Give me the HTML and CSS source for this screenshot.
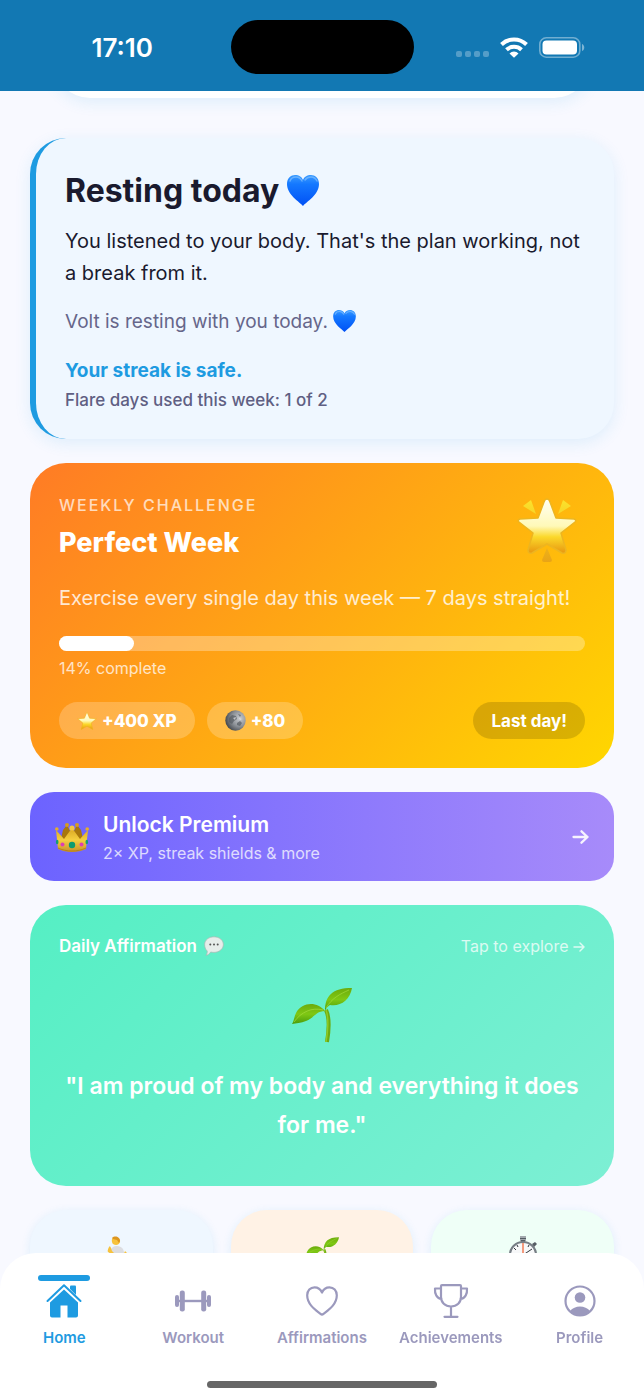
FILE: index.html
```html
<!DOCTYPE html>
<html lang="en">
<head>
  <meta charset="UTF-8" />
  <meta name="viewport" content="width=device-width, initial-scale=1" />
  <title>Home</title>
  <link rel="stylesheet" href="styles.css">
</head>
<body>
  <!-- shared drawings -->
  <svg class="defs" aria-hidden="true">
    <defs>
      <linearGradient id="heartFill" x1="0" y1="0" x2="0" y2="1">
        <stop offset="0" stop-color="#3a9bff" />
        <stop offset=".3" stop-color="#1478ff" />
        <stop offset="1" stop-color="#0050f5" />
      </linearGradient>
      <linearGradient id="starFill" x1="0" y1="0" x2="0" y2="1">
        <stop offset="0" stop-color="#fffff4" />
        <stop offset=".5" stop-color="#fff9b8" />
        <stop offset=".7" stop-color="#fbd82a" />
        <stop offset="1" stop-color="#e8960f" />
      </linearGradient>
      <linearGradient id="rayFill" x1="0" y1="0" x2="0" y2="1">
        <stop offset="0" stop-color="#fbe22c" />
        <stop offset="1" stop-color="#e9a416" />
      </linearGradient>
      <linearGradient id="leafFill" x1="0" y1="0" x2="0" y2="1">
        <stop offset="0" stop-color="#6cab0c" />
        <stop offset=".5" stop-color="#7fc814" />
        <stop offset="1" stop-color="#4b9c0b" />
      </linearGradient>
      <linearGradient id="goldFill" x1="0" y1="0" x2="0" y2="1">
        <stop offset="0" stop-color="#d9a520" />
        <stop offset=".5" stop-color="#f4cf40" />
        <stop offset="1" stop-color="#c8912a" />
      </linearGradient>
      <radialGradient id="moonFill" cx=".7" cy=".4" r=".8">
        <stop offset="0" stop-color="#c9ccd0" />
        <stop offset=".5" stop-color="#8a8f95" />
        <stop offset="1" stop-color="#30343a" />
      </radialGradient>
      <symbol id="heart" viewBox="0 0 32 31">
        <path fill="url(#heartFill)" d="M16 31C13 27 0 20 0 9 0 3 4 0 8 0c4 0 7 2 8 5 1-3 4-5 8-5s8 3 8 9c0 11-13 18-16 22z" />
        <path fill="none" stroke="#8fc8ff" stroke-width="1.500" stroke-linecap="round" opacity=".6" d="M3 6c1-3 4-4 6-4 3 0 5 2 6 4M18 5c2-3 5-3 6-3 3 0 5 2 6 4" />
      </symbol>
      <symbol id="seedling" viewBox="0 0 60 56">
        <path fill="none" stroke="#6cab12" stroke-width="4" d="M34 22c4 8 3 20 1 32" />
        <path fill="none" stroke="#8fc925" stroke-width="1.500" d="M34 22c3 8 2 20 0 32" />
        <path fill="url(#leafFill)" d="M33 23C33 8 40 0 60 0 58 12 48 19 38 17c-2 1-4 3-5 6z" />
        <path fill="url(#leafFill)" d="M33 23C25 13 10 14 4 25c-2 4-2 8-4 11 4-1 9-1 14-3 8-3 10-10 19-10z" />
        <path fill="none" stroke="#a4dc3c" stroke-width="1" opacity=".7" d="M34 20C40 10 48 6 57 2M31 22C20 19 9 24 2 34" />
      </symbol>
    </defs>
  </svg>

  <div class="app">
    <header class="status-bar">
      <span class="clock">17:10</span>
      <span class="island"></span>
      <span class="signals">
        <svg class="dots" width="33" height="6" viewBox="0 0 33 6" fill="#fff" opacity=".28" aria-hidden="true">
          <rect width="6" height="6" rx="2" /><rect x="9" width="6" height="6" rx="2" /><rect x="18" width="6" height="6" rx="2" /><rect x="27" width="6" height="6" rx="2" />
        </svg>
        <svg width="28" height="21" viewBox="0 0 28 21" aria-hidden="true">
          <path fill="none" stroke="#fff" stroke-width="4" d="M1.500 7.500a18 18 0 0 1 25 0M6.500 12.800a11 11 0 0 1 15 0" />
          <path fill="#fff" d="M14 20.800l-4.500-4.400a6.500 6.500 0 0 1 9 0z" />
        </svg>
        <svg width="46" height="21" viewBox="0 0 46 21" aria-hidden="true">
          <rect x=".8" y=".8" width="40" height="19.400" rx="6.500" fill="none" stroke="#fff" stroke-width="1.600" opacity=".4" />
          <rect x="3.500" y="3.500" width="34.500" height="14" rx="4" fill="#fff" />
          <path fill="#fff" opacity=".45" d="M43 7c3 1 3 6 0 7z" />
        </svg>
      </span>
    </header>

    <main class="content">
      <div class="scrolled-card"></div>

      <section class="card rest-card">
        <h1>Resting today <svg class="heart-lg" aria-hidden="true"><use href="#heart" /></svg></h1>
        <p class="rest-text">You listened to your body. That's the plan working, not a break from it.</p>
        <p class="rest-note">Volt is resting with you today. <svg class="heart-sm" aria-hidden="true"><use href="#heart" /></svg></p>
        <p class="streak">Your streak is safe.</p>
        <p class="flare">Flare days used this week: 1 of 2</p>
      </section>

      <section class="card challenge-card">
        <div class="challenge-head">
          <div>
            <p class="eyebrow">WEEKLY CHALLENGE</p>
            <h2>Perfect Week</h2>
          </div>
          <svg class="challenge-star" viewBox="0 0 60 66" aria-hidden="true">
            <path fill="url(#rayFill)" d="M6 8l8-6 5 14zM54 8l-8-6-5 14zM30 50l-5 12q0 2 2 2h6q2 0 2-2z" />
            <path fill="url(#starFill)" stroke="#edb520" stroke-width="1.500" stroke-linejoin="round" d="M30 1q2 0 3 3l6 16 18 1q3 1 1 3L44 35l5 17q0 4-4 3L30 46 15 55q-4 1-4-3l5-17L2 24q-2-2 1-3l18-1 6-16q1-3 3-3z" />
          </svg>
        </div>
        <p class="challenge-text">Exercise every single day this week — 7 days straight!</p>
        <div class="track"><div class="fill" style="width: 14.3%"></div></div>
        <p class="percent">14% complete</p>
        <div class="pills">
          <span class="pill">
            <svg width="20" height="20" viewBox="0 0 20 20" aria-hidden="true"><path fill="url(#starFill)" stroke="#efb41e" stroke-width=".6" stroke-linejoin="round" d="M10 1l2.600 6.200 6.600.5-5 4.400 1.600 6.400L10 15.200 4.200 18.500l1.600-6.400-5-4.400 6.600-.5z" /></svg>
            +400 XP
          </span>
          <span class="pill">
            <svg width="21" height="21" viewBox="0 0 21 21" aria-hidden="true">
              <circle cx="10.500" cy="10.500" r="10.200" fill="url(#moonFill)" />
              <path fill="#555b61" opacity=".7" d="M4 8l3-3 4 1 1 3-3 2-2 3-3-2zM12 13l3-2 2 2-2 3-3-1zM13 4l3 1-1 2z" />
              <path fill="#e4e6e8" opacity=".7" d="M8 8l3-1-1 3zM14 8l3 1-2 1z" />
            </svg>
            +80
          </span>
          <span class="pill pill-dark">Last day!</span>
        </div>
      </section>

      <a class="premium" href="#premium">
        <svg class="crown" viewBox="0 0 34 29" aria-hidden="true">
          <path fill="#a8770c" d="M5 20L8 7l4-5 5 10 5-10 4 5 3 13z" />
          <circle cx="12" cy="2" r="2" fill="#d59c22" /><circle cx="22" cy="2" r="2" fill="#d59c22" />
          <path fill="url(#goldFill)" d="M3 26L1 7l8 9 8-11 8 11 8-9-2 19c-8 4-20 4-28 0z" />
          <circle cx="1.800" cy="6" r="1.800" fill="#e2ae2c" /><circle cx="32.200" cy="6" r="1.800" fill="#e2ae2c" /><circle cx="17" cy="5" r="2.600" fill="#f3c843" />
          <path fill="none" stroke="#b98218" d="M3 25c8 4 20 4 28 0" />
          <circle cx="17" cy="22" r="3.200" fill="#0d9b70" /><circle cx="7.500" cy="21.500" r="2" fill="#dc3fb4" /><circle cx="26.500" cy="21.500" r="2" fill="#dc3fb4" />
          <ellipse cx="2.200" cy="19" rx="1.300" ry="2.300" fill="#159e70" /><ellipse cx="31.800" cy="19" rx="1.300" ry="2.300" fill="#159e70" />
        </svg>
        <span class="premium-text">
          <strong>Unlock Premium</strong>
          <small>2× XP, streak shields &amp; more</small>
        </span>
        <svg width="17" height="14" viewBox="0 0 17 14" fill="none" stroke="#fff" stroke-width="2.300" stroke-linecap="round" stroke-linejoin="round" opacity=".9" aria-hidden="true"><path d="M1.500 7h14M9.500 1.300L15.500 7l-6 5.700" /></svg>
      </a>

      <section class="card affirmation-card">
        <div class="affirmation-head">
          <h3>Daily Affirmation
            <svg width="20" height="20" viewBox="0 0 20 20" aria-hidden="true">
              <path fill="#e6edea" stroke="#a5bdb5" stroke-width=".8" d="M10 .8c5.300 0 9.400 3.300 9.400 7.700S15.300 16.400 10 16.400c-1.300 0-2.300-.1-3.300-.4C5.500 18 3.500 19.300 2 19.300c1-1.300 1.300-2.700 1.200-4.300C1.500 13.500.6 11 .6 8.500.6 4.100 4.700.8 10 .8z" />
              <circle cx="6.300" cy="8.500" r="1" fill="#555" /><circle cx="10" cy="8.500" r="1" fill="#555" /><circle cx="13.700" cy="8.500" r="1" fill="#555" />
            </svg>
          </h3>
          <a href="#affirmations">Tap to explore
            <svg width="12" height="10" viewBox="0 0 12 10" fill="none" stroke="currentColor" stroke-width="1.500" stroke-linecap="round" stroke-linejoin="round" aria-hidden="true"><path d="M1 5h10M7 1l4 4-4 4" /></svg>
          </a>
        </div>
        <svg class="sprout" aria-hidden="true"><use href="#seedling" /></svg>
        <blockquote>"I am proud of my body and everything it does for me."</blockquote>
      </section>

      <div class="tiles">
        <div class="tile tile-blue">
          <svg width="34" height="34" viewBox="0 0 34 34" aria-hidden="true">
            <path fill="#dcdde1" d="M9 11c3-2 8-1 10 2l1 3 2 2-2 3-3-1v4h-8l-1-6-3-1 1-3z" />
            <path fill="#f7c23c" d="M9 2c4-2 8 1 7 4-1 3-4 4-7 2-1-1-2-5 0-6zM5 11q1-2 2 1l1 3 2 2-1 2-5-3q-1-1 1-5z" />
            <path fill="#dd9620" d="M8 2c3-3 8-1 8 3l-1 2-2-3-4-1z" />
            <path fill="#f7c23c" d="M21 15l2 2-2 4-2-1z" />
            <path fill="#3476c8" d="M9 23h8l5 8-3 1-6-6-6 5-3-2z" />
          </svg>
        </div>
        <div class="tile tile-peach">
          <svg width="34" height="34" aria-hidden="true"><use href="#seedling" /></svg>
        </div>
        <div class="tile tile-mint">
          <svg width="34" height="38" viewBox="0 0 34 38" aria-hidden="true">
            <path fill="#a3a9ae" d="M14 0h6v5h-6z" /><path fill="#565d64" d="M14 2h6v1h-6zM15 4h4v3h-4zM26 8l3-2 2 2-3 3z" />
            <circle cx="17" cy="19" r="13" fill="#f7f8f9" stroke="#777e85" stroke-width="2.200" />
            <path fill="none" stroke="#30353a" stroke-width="1" d="M17 19l9-6M8 12l2 2M5 20h3M29 20h-3M17 31v-3M11 9l1 2M23 9l-1 2" />
            <path stroke="#f2683c" stroke-width="1.300" d="M17 21V7" />
          </svg>
        </div>
      </div>
    </main>

    <nav class="tab-bar">
      <a class="tab active" href="#home">
        <svg class="tab-icon" viewBox="0 0 36 36" fill="currentColor" aria-hidden="true">
          <path d="M18 6.500l14 13v13q0 2-2 2h-8.500v-12h-7v12H6q-2 0-2-2v-13z" />
          <path fill="none" stroke="currentColor" stroke-width="2" stroke-linecap="round" stroke-linejoin="round" d="M1.500 18L18 2.200 34.500 18" />
          <path d="M24 6V3.500q0-1 1-1h4q1 0 1 1V12z" />
        </svg>
        <span>Home</span>
      </a>
      <a class="tab" href="#workout">
        <svg class="tab-icon" viewBox="0 0 36 36" fill="currentColor" aria-hidden="true">
          <rect x="0" y="12" width="4" height="12" rx="2" /><rect x="4.800" y="7.500" width="5" height="21" rx="2.200" />
          <rect x="26.200" y="7.500" width="5" height="21" rx="2.200" /><rect x="32" y="12" width="4" height="12" rx="2" /><rect x="1" y="16.800" width="34" height="2.400" />
        </svg>
        <span>Workout</span>
      </a>
      <a class="tab" href="#affirmations">
        <svg class="tab-icon" viewBox="0 0 36 36" fill="none" stroke="currentColor" stroke-width="2.200" stroke-linejoin="round" aria-hidden="true"><path d="M18 9.500C16.500 6 13.500 4.300 10.500 4.300 6.300 4.300 3.200 7.800 3.200 12.300c0 9.200 8.300 14.600 13.300 18.600q1.500 1.200 3 0C24.500 26.900 32.800 21.500 32.800 12.300c0-4.500-3.100-8-7.300-8-3 0-6 1.700-7.500 5.200z" /></svg>
        <span>Affirmations</span>
      </a>
      <a class="tab" href="#achievements">
        <svg class="tab-icon" viewBox="0 0 36 36" fill="none" stroke="currentColor" stroke-width="2.200" stroke-linecap="round" stroke-linejoin="round" aria-hidden="true"><path d="M9 2.200h18q1 0 1 1V14c0 5.500-4 9.500-10 9.500S8 19.500 8 14V3.200q0-1 1-1zM8 5.500H2c-.5 5.500 2 10 6.500 10.500M28 5.500h6c.5 5.500-2 10-6.500 10.500M18 23.500v10.300M11.500 33.800h13" /></svg>
        <span>Achievements</span>
      </a>
      <a class="tab" href="#profile">
        <svg class="tab-icon" viewBox="0 0 36 36" fill="currentColor" aria-hidden="true">
          <circle cx="18" cy="18" r="14.500" fill="none" stroke="currentColor" stroke-width="2.200" />
          <circle cx="18" cy="14.500" r="5.300" /><path d="M8 28c2.500-3 6-4.500 10-4.500s7.500 1.500 10 4.500c-2.500 3-6 5-10 5s-7.500-2-10-5z" />
        </svg>
        <span>Profile</span>
      </a>
      <span class="home-indicator"></span>
    </nav>
  </div>
</body>
</html>
```
FILE: styles.css
```css
* {
  box-sizing: border-box;
}
body, h1, h2, h3, p, blockquote {
  margin: 0;
}
body {
  font-family: Inter, "Liberation Sans", sans-serif;
  background: #f8f9ff;
  color: #1a1a2e;
}
a {
  color: inherit;
  text-decoration: none;
}
svg {
  flex-shrink: 0;
}
.defs {
  position: absolute;
  width: 0;
  height: 0;
}
.app {
  height: 100vh;
  display: flex;
  flex-direction: column;
  overflow: hidden;
}

/* status bar */
.status-bar {
  position: relative;
  z-index: 1;
  flex-shrink: 0;
  display: grid;
  grid-template-columns: 1fr 183px 1fr;
  align-items: center;
  padding: 20px 0 17px;
  background: #1278b3;
  color: #fff;
}
.clock {
  padding-left: 14px;
  text-align: center;
  font-size: 26px;
  font-weight: 600;
}
.island {
  height: 54px;
  border-radius: 27px;
  background: #000;
}
.signals {
  display: flex;
  align-items: center;
  justify-content: flex-end;
  gap: 11px;
  padding-right: 59px;
}
.dots {
  margin-top: 14px;
}

/* content */
.content {
  flex: 1;
  display: flex;
  flex-direction: column;
  gap: 24px;
  padding: 0 30px;
}
.content > * {
  flex-shrink: 0;
}
.scrolled-card {
  height: 72px;
  margin: -65px 24px 16px;
  border-radius: 36px;
  background: #fff;
  box-shadow: 0 4px 16px rgba(30, 155, 225, 0.12);
}
.card {
  border-radius: 36px;
}
.rest-card {
  padding: 33px 29px 27px;
  border-left: 6px solid #1e9be1;
  background: #eff7ff;
  box-shadow: 0 4px 16px rgba(30, 155, 225, 0.12);
}
h1 {
  font-size: 32px;
  line-height: 40px;
  font-weight: 700;
}
.heart-lg {
  width: 32px;
  height: 31px;
  vertical-align: -4px;
}
.heart-sm {
  width: 23px;
  height: 22px;
  vertical-align: -4px;
}
.rest-text {
  margin-top: 14px;
  font-size: 20px;
  line-height: 32px;
}
.rest-note {
  margin-top: 19px;
  font-size: 19px;
  line-height: 28px;
  color: #66668a;
}
.streak {
  margin-top: 21px;
  font-size: 19px;
  line-height: 28px;
  font-weight: 700;
  color: #1e9be1;
}
.flare {
  margin-top: 3px;
  font-size: 17px;
  line-height: 24px;
  font-weight: 500;
  color: #5f5f83;
}

/* weekly challenge */
.challenge-card {
  padding: 30px 29px 29px;
  background: linear-gradient(135deg, #ff7b25, #ffd700);
  color: #fff;
}
.challenge-head {
  display: flex;
  justify-content: space-between;
}
.eyebrow {
  font-size: 16px;
  line-height: 24px;
  font-weight: 500;
  letter-spacing: 2px;
  opacity: 0.7;
}
h2 {
  margin-top: 10px;
  font-size: 27px;
  line-height: 32px;
  font-weight: 800;
}
.challenge-star {
  width: 60px;
  height: 66px;
  margin: 5px 8px 0 0;
}
.challenge-text {
  margin-top: 20px;
  font-size: 20px;
  line-height: 28px;
  opacity: 0.8;
}
.track {
  height: 15px;
  margin-top: 24px;
  border-radius: 8px;
  background: rgba(255, 255, 255, 0.3);
}
.fill {
  height: 100%;
  border-radius: 8px;
  background: #fff;
}
.percent {
  margin-top: 7px;
  font-size: 16px;
  line-height: 20px;
  opacity: 0.75;
}
.pills {
  display: flex;
  gap: 12px;
  margin-top: 24px;
}
.pill {
  display: flex;
  align-items: center;
  gap: 5px;
  height: 37px;
  padding: 0 18px;
  border-radius: 19px;
  background: rgba(255, 255, 255, 0.22);
  font-size: 17px;
  font-weight: 800;
}
.pill-dark {
  margin-left: auto;
  background: rgba(0, 0, 0, 0.15);
  font-weight: 700;
}

/* premium banner */
.premium {
  display: flex;
  align-items: center;
  gap: 14px;
  padding: 19px 25px 18px;
  border-radius: 24px;
  background: linear-gradient(90deg, #6c63ff, #a78bfa);
  color: #fff;
}
.crown {
  width: 34px;
  height: 29px;
}
.premium-text {
  flex: 1;
}
.premium-text strong {
  display: block;
  font-size: 21px;
  line-height: 28px;
  font-weight: 600;
}
.premium-text small {
  display: block;
  margin-top: 4px;
  font-size: 16px;
  line-height: 20px;
  opacity: 0.75;
}

/* daily affirmation */
.affirmation-card {
  padding: 29px 29px 41px;
  background: linear-gradient(135deg, #55efc4, #7defd4);
  color: #fff;
}
.affirmation-head {
  display: flex;
  justify-content: space-between;
  line-height: 24px;
}
.affirmation-head h3 {
  display: flex;
  align-items: center;
  gap: 7px;
  font-size: 17px;
  font-weight: 600;
}
.affirmation-head a {
  font-size: 16px;
  opacity: 0.75;
}
.sprout {
  display: block;
  width: 60px;
  height: 56px;
  margin: 30px auto 23px;
}
blockquote {
  font-size: 23px;
  line-height: 39px;
  font-weight: 600;
  text-align: center;
}

/* shortcut tiles */
.tiles {
  display: grid;
  grid-template-columns: repeat(3, 1fr);
  gap: 18px;
}
.tile {
  display: flex;
  justify-content: center;
  height: 160px;
  padding-top: 26px;
  border-radius: 36px;
  box-shadow: 0 2px 10px rgba(30, 155, 225, 0.12);
}
.tile-blue {
  background: #eff7ff;
}
.tile-peach {
  background: #fff2e5;
}
.tile-mint {
  background: #effff7;
}

/* tab bar */
.tab-bar {
  position: fixed;
  bottom: 0;
  left: 0;
  right: 0;
  z-index: 2;
  display: grid;
  grid-template-columns: repeat(5, 1fr);
  padding: 22px 0 12px;
  border-radius: 36px 36px 0 0;
  background: #fff;
}
.tab {
  display: flex;
  flex-direction: column;
  align-items: center;
  padding-top: 8px;
  color: #9b99bd;
  font-size: 15px;
  line-height: 20px;
  font-weight: 600;
}
.tab.active {
  padding-top: 0;
  color: #1e9be1;
}
.tab.active::before {
  content: "";
  width: 52px;
  height: 6px;
  margin-bottom: 2px;
  border-radius: 3px;
  background: #1e9be1;
}
.tab-icon {
  width: 36px;
  height: 36px;
  margin-bottom: 9px;
}
.home-indicator {
  grid-column: 1 / -1;
  justify-self: center;
  width: 230px;
  height: 7px;
  margin-top: 33px;
  border-radius: 4px;
  background: #666;
}
```
